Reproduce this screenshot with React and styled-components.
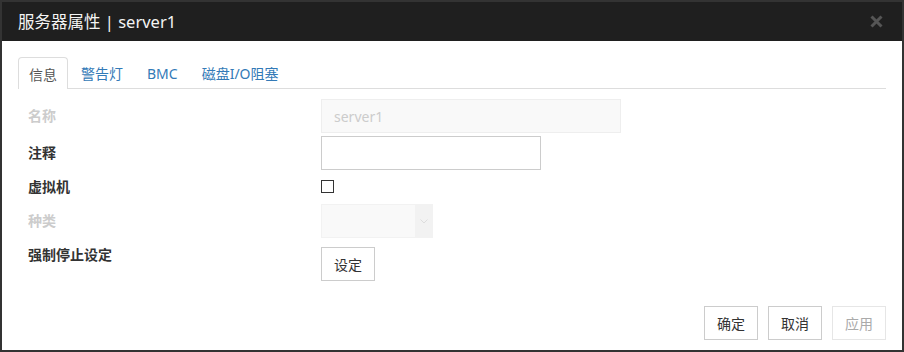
import React from "react";
import styled, { createGlobalStyle } from "styled-components";

const GlobalStyle = createGlobalStyle`
  body {
    margin: 0;
    padding: 0;
    background: #fff;
    font-family: "Noto Sans", "Noto Sans CJK SC", sans-serif;
  }
`;

const Dialog = styled.div`
  width: 904px;
  height: 352px;
  box-sizing: border-box;
  border: 2px solid #333;
  background: #fff;
  display: flex;
  flex-direction: column;
`;

const Header = styled.div`
  height: 39px;
  background: #1f1f1f;
  display: flex;
  align-items: center;
  justify-content: space-between;
  padding: 0 19px 0 16px;
`;

const Title = styled.div`
  color: #f4f4f4;
  font-size: 16.5px;
  line-height: 22px;
`;

const Close = styled.svg`
  width: 13px;
  height: 13px;
`;

const Body = styled.div`
  flex: 1;
  display: flex;
  flex-direction: column;
  padding: 16px 16px 10px 16px;
`;

const TabBar = styled.div`
  display: flex;
  height: 31px;
  border-bottom: 1px solid #ddd;
`;

const Tab = styled.div`
  padding: 0 10px;
  margin-right: 2px;
  border: 1px solid ${(p) => (p.$active ? "#ddd" : "transparent")};
  border-bottom: none;
  border-radius: 4px 4px 0 0;
  background: #fff;
  height: ${(p) => (p.$active ? "32px" : "31px")};
  box-sizing: border-box;
  display: flex;
  align-items: center;
  font-size: 14px;
  color: ${(p) => (p.$active ? "#555" : "#337ab7")};
`;

const Form = styled.div`
  display: flex;
  flex-direction: column;
  padding: 10px 0 0 10px;
`;

const Row = styled.div`
  display: flex;
  align-items: flex-start;
  min-height: 34px;
  margin-bottom: ${(p) => p.$mb || 0}px;
`;

const Label = styled.div`
  width: 293px;
  padding-top: 7px;
  line-height: 20px;
  font-size: 14px;
  font-weight: 700;
  color: ${(p) => (p.$disabled ? "#ccc" : "#333")};
`;

const Input = styled.div`
  width: ${(p) => p.$w}px;
  height: 34px;
  box-sizing: border-box;
  border: 1px solid ${(p) => (p.$disabled ? "#eee" : "#ccc")};
  background: ${(p) => (p.$disabled ? "#f9f9f9" : "#fff")};
  padding: 0 12px;
  display: flex;
  align-items: center;
  font-size: 14px;
  color: #ccc;
`;

const Check = styled.div`
  width: 13px;
  height: 13px;
  box-sizing: border-box;
  border: 1px solid #333;
  background: #fff;
  margin-top: 10px;
`;

const Select = styled.div`
  width: 112px;
  height: 34px;
  box-sizing: border-box;
  border: 1px solid #f2f2f2;
  background: #f9f9f9;
  display: flex;
  justify-content: flex-end;
`;

const SelectArrow = styled.div`
  width: 17px;
  background: #f2f2f2;
  display: flex;
  align-items: center;
  justify-content: center;
`;

const Button = styled.div`
  height: 34px;
  box-sizing: border-box;
  padding: 0 12px;
  border: 1px solid ${(p) => (p.$disabled ? "#e6e6e6" : "#ccc")};
  background: #fff;
  display: flex;
  align-items: center;
  font-size: 14px;
  color: ${(p) => (p.$disabled ? "#aaa" : "#333")};
  margin-top: ${(p) => p.$mt || 0}px;
`;

const Footer = styled.div`
  margin-top: auto;
  display: flex;
  justify-content: flex-end;
  gap: 10px;
`;

export default function App() {
  return (
    <>
      <GlobalStyle />
      <Dialog>
        <Header>
          <Title>服务器属性 | server1</Title>
          <Close viewBox="0 0 13 13">
            <path d="M1.5 1.5 L11.5 11.5 M11.5 1.5 L1.5 11.5" stroke="#555" strokeWidth="3" />
          </Close>
        </Header>
        <Body>
          <TabBar>
            <Tab $active>信息</Tab>
            <Tab>警告灯</Tab>
            <Tab>BMC</Tab>
            <Tab>磁盘I/O阻塞</Tab>
          </TabBar>
          <Form>
            <Row $mb={3}>
              <Label $disabled>名称</Label>
              <Input $w={300} $disabled>server1</Input>
            </Row>
            <Row>
              <Label>注释</Label>
              <Input $w={220} />
            </Row>
            <Row>
              <Label>虚拟机</Label>
              <Check />
            </Row>
            <Row>
              <Label $disabled>种类</Label>
              <Select>
                <SelectArrow>
                  <svg width="8" height="5" viewBox="0 0 8 5">
                    <path d="M0.5 0.5 L4 4 L7.5 0.5" fill="none" stroke="#ddd" strokeWidth="1" />
                  </svg>
                </SelectArrow>
              </Select>
            </Row>
            <Row>
              <Label>强制停止设定</Label>
              <Button $mt={9}>设定</Button>
            </Row>
          </Form>
          <Footer>
            <Button>确定</Button>
            <Button>取消</Button>
            <Button $disabled>应用</Button>
          </Footer>
        </Body>
      </Dialog>
    </>
  );
}
